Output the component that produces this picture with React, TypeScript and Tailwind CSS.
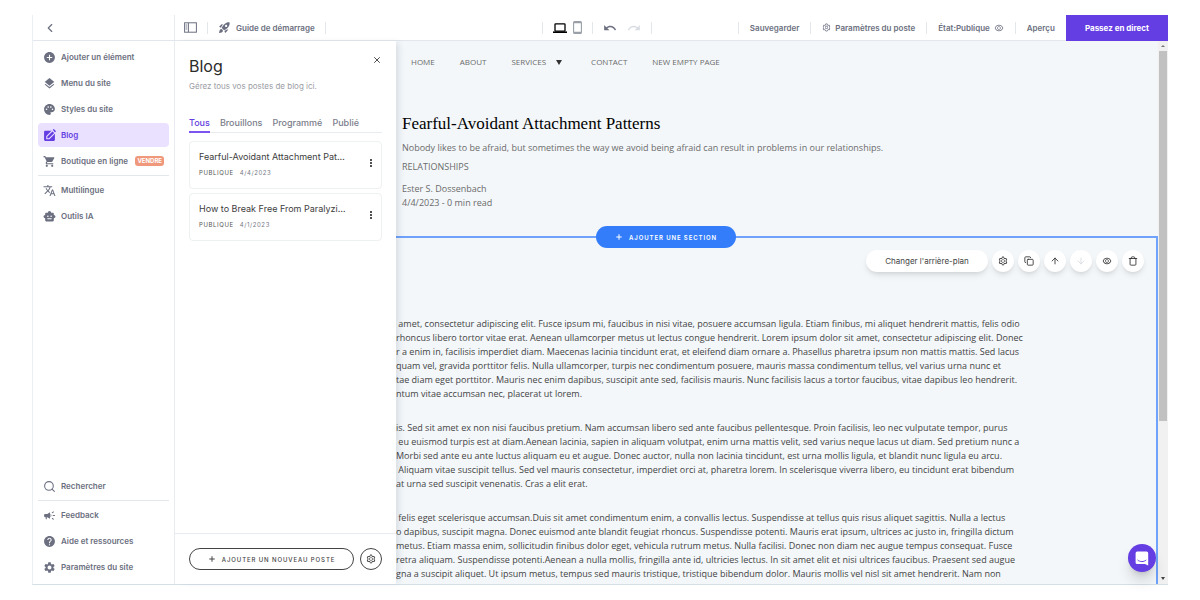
import type { ComponentType, ReactNode } from 'react'
import {
  MdAddCircle, MdCampaign, MdHelp, MdLayers, MdPalette, MdRedo, MdRocketLaunch,
  MdSettings, MdShoppingCart, MdSmartToy, MdTranslate, MdUndo, MdMoreVert,
} from 'react-icons/md'
import { AiOutlineEye, AiOutlineSetting } from 'react-icons/ai'
import { ArrowDown, ArrowUp, ChevronLeft, Copy, Plus, Search, Trash, X } from 'lucide-react'

type Icon = ComponentType<{ className?: string }>

type NavItem = { label: string, icon: Icon, active?: boolean, badge?: string }

function EditIcon({ className }: { className?: string }) {
  return (
    <svg viewBox="0 0 24 24" className={className}>
      <path d="M4 3h16a2 2 0 0 1 2 2v15a2 2 0 0 1-2 2H4a2 2 0 0 1-2-2V5a2 2 0 0 1 2-2z" fill="currentColor" />
      <path d="M7 13.500 17.500 3 22 7.500 11.500 18H7z" fill="currentColor" stroke="#e9e1ff" strokeWidth="2" />
      <path d="M18 1.500 20 0l4 4-1.500 2z" fill="currentColor" />
    </svg>
  )
}

const mainNav: NavItem[] = [
  { label: 'Ajouter un élément', icon: MdAddCircle },
  { label: 'Menu du site', icon: MdLayers },
  { label: 'Styles du site', icon: MdPalette },
  { label: 'Blog', icon: EditIcon, active: true },
  { label: 'Boutique en ligne', icon: MdShoppingCart, badge: 'VENDRE' },
]

const toolsNav: NavItem[] = [
  { label: 'Multilingue', icon: MdTranslate },
  { label: 'Outils IA', icon: MdSmartToy },
]

const helpNav: NavItem[] = [
  { label: 'Feedback', icon: MdCampaign },
  { label: 'Aide et ressources', icon: MdHelp },
  { label: 'Paramètres du site', icon: MdSettings },
]

const tabs = ['Tous', 'Brouillons', 'Programmé', 'Publié']

const posts = [
  { title: 'Fearful-Avoidant Attachment Pat…', date: '4/4/2023' },
  { title: 'How to Break Free From Paralyzi…', date: '4/1/2023' },
]

const paragraphs = [
  [
    ' amet, consectetur adipiscing elit. Fusce ipsum mi, faucibus in nisi vitae, posuere accumsan ligula. Etiam finibus, mi aliquet hendrerit mattis, felis odio',
    'rhoncus libero tortor vitae erat. Aenean ullamcorper metus ut lectus congue hendrerit. Lorem ipsum dolor sit amet, consectetur adipiscing elit. Donec',
    'r a enim in, facilisis imperdiet diam. Maecenas lacinia tincidunt erat, et eleifend diam ornare a. Phasellus pharetra ipsum non mattis mattis. Sed lacus',
    'quam vel, gravida porttitor felis. Nulla ullamcorper, turpis nec condimentum posuere, mauris massa condimentum tellus, vel varius urna nunc et',
    'tae diam eget porttitor. Mauris nec enim dapibus, suscipit ante sed, facilisis mauris. Nunc facilisis lacus a tortor faucibus, vitae dapibus leo hendrerit.',
    'ntum vitae accumsan nec, placerat ut lorem.',
  ],
  [
    'is. Sed sit amet ex non nisi faucibus pretium. Nam accumsan libero sed ante faucibus pellentesque. Proin facilisis, leo nec vulputate tempor, purus',
    ' eu euismod turpis est at diam.Aenean lacinia, sapien in aliquam volutpat, enim urna mattis velit, sed varius neque lacus ut diam. Sed pretium nunc a',
    'Morbi sed ante eu ante luctus aliquam eu et augue. Donec auctor, nulla non lacinia tincidunt, est urna mollis ligula, et blandit nunc ligula eu arcu.',
    ' Aliquam vitae suscipit tellus. Sed vel mauris consectetur, imperdiet orci at, pharetra lorem. In scelerisque viverra libero, eu tincidunt erat bibendum',
    'at urna sed suscipit venenatis. Cras a elit erat.',
  ],
  [
    ' felis eget scelerisque accumsan.Duis sit amet condimentum enim, a convallis lectus. Suspendisse at tellus quis risus aliquet sagittis. Nulla a lectus',
    'o dapibus, suscipit magna. Donec euismod ante blandit feugiat rhoncus. Suspendisse potenti. Mauris erat ipsum, ultrices ac justo in, fringilla dictum',
    'metus. Etiam massa enim, sollicitudin finibus dolor eget, vehicula rutrum metus. Nulla facilisi. Donec non diam nec augue tempus consequat. Fusce',
    'retra aliquam. Suspendisse potenti.Aenean a nulla mollis, fringilla ante id, ultricies lectus. In sit amet elit et nisi ultrices faucibus. Praesent sed augue',
    'gna a suscipit aliquet. Ut ipsum metus, tempus sed mauris tristique, tristique bibendum dolor. Mauris mollis vel nisl sit amet hendrerit. Nam non',
  ],
]

function Divider() {
  return <span className="h-3 w-px shrink-0 bg-[#e3e6ea]" />
}

function PanelIcon() {
  return (
    <svg viewBox="0 0 13 11" className="h-[11px] w-[13px]" fill="none" stroke="currentColor">
      <rect x="0.6" y="0.8" width="11.8" height="9.4" />
      <path d="M4.4 1v9" />
      <path d="M1.6 3h1.6M1.6 5h1.6M1.6 7h1.6" strokeWidth="0.9" />
    </svg>
  )
}

function LaptopIcon() {
  return (
    <svg viewBox="0 0 14 10" className="h-2.5 w-3.5" fill="none" stroke="currentColor">
      <rect x="2" y="0.8" width="10" height="7.400" rx="0.6" strokeWidth="1.3" />
      <path d="M0 9.200h14" strokeWidth="1.6" />
    </svg>
  )
}

function PhoneIcon() {
  return (
    <svg viewBox="0 0 9 13" className="h-[13px] w-[9px]" fill="none" stroke="currentColor">
      <rect x="0.6" y="0.6" width="7.8" height="11.8" rx="1" strokeWidth="1.1" />
      <path d="M1 1.6h7M1 11.4h7" strokeWidth="1.4" />
    </svg>
  )
}

function ChatIcon() {
  return (
    <svg viewBox="0 0 14 15" className="h-[15px] w-[14px]">
      <path d="M2.2 0.6h9.4a1.6 1.6 0 0 1 1.6 1.6v12.2l-3.2-1.4H2.2a1.6 1.6 0 0 1-1.6-1.6V2.2A1.6 1.6 0 0 1 2.2 0.6z" fill="#fff" />
      <path d="M2.8 9.2c2.400 1.900 5.800 1.900 8.200 0" fill="none" stroke="#643ee2" strokeWidth="1" strokeLinecap="round" />
    </svg>
  )
}

function SidebarItem({ item }: { item: NavItem }) {
  const Glyph = item.icon
  return (
    <a
      href="#"
      className={`flex h-6 items-center gap-[5px] rounded-sm px-[5px] text-[8px] font-semibold ${item.active ? 'bg-[#e9e1ff] text-[#643ee2]' : 'text-[#6b6f80]'}`}
    >
      <Glyph className="size-[13px] shrink-0" />
      <span className="whitespace-nowrap">{item.label}</span>
      {item.badge && (
        <span className="ml-auto rounded-[3px] bg-[#f0987c] px-0.5 text-[6px] leading-[10px] font-bold text-white">{item.badge}</span>
      )}
    </a>
  )
}

function RoundButton({ label, disabled, children }: { label: string, disabled?: boolean, children: ReactNode }) {
  return (
    <button
      type="button"
      aria-label={label}
      disabled={disabled}
      className="flex size-[22px] items-center justify-center rounded-full bg-white text-[#2b2b2b] shadow-md shadow-black/10 disabled:text-[#d5d8dc]"
    >
      {children}
    </button>
  )
}

function TopBar() {
  return (
    <header className="flex h-[26px] shrink-0 border-b border-[#e1e7ec] text-[8px] font-semibold text-[#6b6f80]">
      <div className="flex flex-1">
        <div className="flex w-[142px] shrink-0 items-center border-r border-[#e8ebef] pl-2.5">
          <button type="button" aria-label="Retour"><ChevronLeft className="size-3.5" /></button>
        </div>
        <div className="flex items-center gap-2.5 pl-[9px]">
          <button type="button" aria-label="Panneau"><PanelIcon /></button>
          <Divider />
          <button type="button" className="flex items-center gap-[5px] whitespace-nowrap">
            <MdRocketLaunch className="size-[13px]" />
            Guide de démarrage
          </button>
          <Divider />
        </div>
      </div>

      <div className="flex items-center gap-2.5 pr-2">
        <Divider />
        <div className="flex items-center gap-1.5">
          <button type="button" aria-label="Ordinateur" className="text-black"><LaptopIcon /></button>
          <button type="button" aria-label="Mobile" className="text-[#9aa0a8]"><PhoneIcon /></button>
        </div>
        <Divider />
        <button type="button" aria-label="Annuler"><MdUndo className="size-3.5" /></button>
        <button type="button" aria-label="Rétablir" className="text-[#d9dde3]"><MdRedo className="size-3.5" /></button>
        <Divider />
      </div>

      <div className="flex flex-1 items-center justify-end gap-[11px] whitespace-nowrap">
        <Divider />
        <button type="button">Sauvegarder</button>
        <Divider />
        <button type="button" className="flex items-center gap-1">
          <AiOutlineSetting className="size-[9px]" />
          Paramètres du poste
        </button>
        <Divider />
        <button type="button" className="flex items-center gap-1">
          État:Publique
          <AiOutlineEye className="size-2.5" />
        </button>
        <Divider />
        <button type="button">Aperçu</button>
        <button type="button" className="-mb-px self-stretch bg-[#643ee2] px-[19px] font-bold text-white">Passez en direct</button>
      </div>
    </header>
  )
}

function Sidebar() {
  return (
    <nav className="flex w-[142px] shrink-0 flex-col gap-0.5 border-r border-[#e8ebef] px-[5px] pt-1 pb-[5px]">
      {mainNav.map((item) => <SidebarItem key={item.label} item={item} />)}
      <hr className="border-[#e3e6ea]" />
      {toolsNav.map((item) => <SidebarItem key={item.label} item={item} />)}
      <div className="flex-1" />
      <SidebarItem item={{ label: 'Rechercher', icon: Search }} />
      <hr className="border-[#e3e6ea]" />
      {helpNav.map((item) => <SidebarItem key={item.label} item={item} />)}
    </nav>
  )
}

function BlogPanel() {
  return (
    <section className="z-10 flex w-[221px] shrink-0 flex-col bg-white shadow-[5px_0_6px_-2px_rgba(40,60,80,0.12)]">
      <div className="flex-1 px-3.5 pt-3.5">
        <div className="flex items-start justify-between">
          <h2 className="text-base leading-[22px] text-[#2b2b2b]">Blog</h2>
          <button type="button" aria-label="Fermer" className="text-[#2b2b2b]"><X className="size-2.5" strokeWidth={2} /></button>
        </div>
        <p className="mt-px text-[8px] leading-4 text-[#9a9da5]">Gérez tous vos postes de blog ici.</p>

        <div className="mt-[21px] flex gap-2.5 border-b border-[#e9ecef] text-[9px] leading-4 font-medium">
          {tabs.map((tab, i) => (
            <button
              key={tab}
              type="button"
              className={i === 0 ? '-mb-px border-b-2 border-[#7c55ee] text-[#643ee2]' : 'pb-px text-[#7b7e8b]'}
            >
              {tab}
            </button>
          ))}
        </div>

        <ul className="mt-2 flex flex-col gap-1">
          {posts.map((post) => (
            <li key={post.title} className="flex h-12 items-center justify-between rounded-sm border border-[#edf1f1] pr-1 pl-[9px]">
              <div>
                <h3 className="text-[9px] leading-4 whitespace-nowrap text-[#3d3d3d]">{post.title}</h3>
                <p className="flex gap-1.5 text-[6px] leading-4 tracking-widest text-[#777a86]">
                  <span className="text-[#555]">PUBLIQUE</span>
                  <span>{post.date}</span>
                </p>
              </div>
              <button type="button" aria-label="Options" className="pb-1 text-[#2b2b2b]"><MdMoreVert className="size-3" /></button>
            </li>
          ))}
        </ul>
      </div>

      <div className="flex h-[51px] items-center gap-1.5 border-t border-[#e8ebef] px-3.5">
        <button type="button" className="flex h-[22px] flex-1 items-center justify-center gap-1.5 rounded-full border border-[#444] text-[6px] font-medium tracking-[0.15em] whitespace-nowrap text-[#444]">
          <Plus className="size-2" strokeWidth={3} />
          AJOUTER UN NOUVEAU POSTE
        </button>
        <button type="button" aria-label="Paramètres du blog" className="flex size-[22px] items-center justify-center rounded-full border border-[#444] text-[#2b2b2b]">
          <AiOutlineSetting className="size-2.5" />
        </button>
      </div>
    </section>
  )
}

function SiteCanvas() {
  return (
    <main className="flex min-w-0 flex-1 flex-col overflow-hidden bg-[#f3f7fa] font-['Open_Sans',sans-serif] text-[#6b6b6b]">
      <nav className="flex items-center gap-[25px] pt-[13px] pl-[15px] text-[8px] leading-4">
        <a href="#">HOME</a>
        <a href="#">ABOUT</a>
        <a href="#" className="flex items-center gap-2.5 pr-1">
          SERVICES
          <svg viewBox="0 0 6 5" className="h-[5px] w-1.5" fill="#333"><path d="M0 0h6L3 5z" /></svg>
        </a>
        <a href="#">CONTACT</a>
        <a href="#">NEW EMPTY PAGE</a>
      </nav>

      <div className="mt-10 h-[126px] shrink-0 pl-1.5 text-[9px] leading-[14px]">
        <h1 className="font-['Liberation_Serif',serif] text-[17px] leading-7 font-medium text-black">Fearful-Avoidant Attachment Patterns</h1>
        <p className="mt-[3px]">Nobody likes to be afraid, but sometimes the way we avoid being afraid can result in problems in our relationships.</p>
        <p className="mt-[5px]">RELATIONSHIPS</p>
        <p className="mt-2">Ester S. Dossenbach</p>
        <p>4/4/2023 - 0 min read</p>
      </div>

      <section className="relative min-h-0 flex-1 border-t-2 border-r-2 border-[#6ea2fb]">
        <button type="button" className="absolute -top-3 left-[200px] flex h-[22px] w-[140px] items-center justify-center gap-1.5 rounded-full bg-[#337dfa] font-[Inter,sans-serif] text-[6px] font-semibold tracking-[0.15em] text-white">
          <Plus className="size-2" strokeWidth={3} />
          AJOUTER UNE SECTION
        </button>

        <div className="flex justify-end gap-1 pt-3 pr-3">
          <button type="button" className="h-[22px] w-[122px] rounded-full bg-white font-[Inter,sans-serif] text-[8px] text-[#444] shadow-md shadow-black/10">
            Changer l'arrière-plan
          </button>
          <RoundButton label="Paramètres"><AiOutlineSetting className="size-2.5" /></RoundButton>
          <RoundButton label="Dupliquer"><Copy className="size-2.5" /></RoundButton>
          <RoundButton label="Monter"><ArrowUp className="size-2.5" /></RoundButton>
          <RoundButton label="Descendre" disabled><ArrowDown className="size-2.5" /></RoundButton>
          <RoundButton label="Masquer"><AiOutlineEye className="size-2.5" /></RoundButton>
          <RoundButton label="Supprimer"><Trash className="size-2.5" /></RoundButton>
        </div>

        <div className="mt-[45px] flex flex-col gap-5 text-[9px] leading-[14px] whitespace-pre text-[#444]">
          {paragraphs.map((lines, i) => (
            <p key={i}>
              {lines.map((line) => <span key={line} className="block">{line}</span>)}
            </p>
          ))}
        </div>
      </section>
    </main>
  )
}

function ScrollTrack() {
  return (
    <div className="flex w-2.5 shrink-0 flex-col items-center justify-between bg-[#f1f1f1] py-1">
      <svg viewBox="0 0 4 2" className="h-0.5 w-1" fill="#777"><path d="M0 2h4L2 0z" /></svg>
      <span className="mt-1 w-2 flex-[370] bg-[#c1c1c1]" />
      <span className="flex-[156]" />
      <svg viewBox="0 0 4 3" className="h-[3px] w-1" fill="#444"><path d="M0 0h4L2 3z" /></svg>
    </div>
  )
}

export default function App() {
  return (
    <div className="h-screen overflow-hidden bg-white px-8 pt-[15px] pb-[15px] font-[Inter,sans-serif]">
      <div className="relative flex h-full flex-col border-b border-l border-b-[#d5dfe6] border-l-[#eceff2]">
        <TopBar />
        <div className="flex min-h-0 flex-1">
          <Sidebar />
          <BlogPanel />
          <SiteCanvas />
          <ScrollTrack />
        </div>
        <button type="button" aria-label="Messagerie" className="absolute right-3 bottom-3 z-20 flex size-7 items-center justify-center rounded-full bg-[#643ee2] shadow-lg shadow-black/20">
          <ChatIcon />
        </button>
      </div>
    </div>
  )
}
